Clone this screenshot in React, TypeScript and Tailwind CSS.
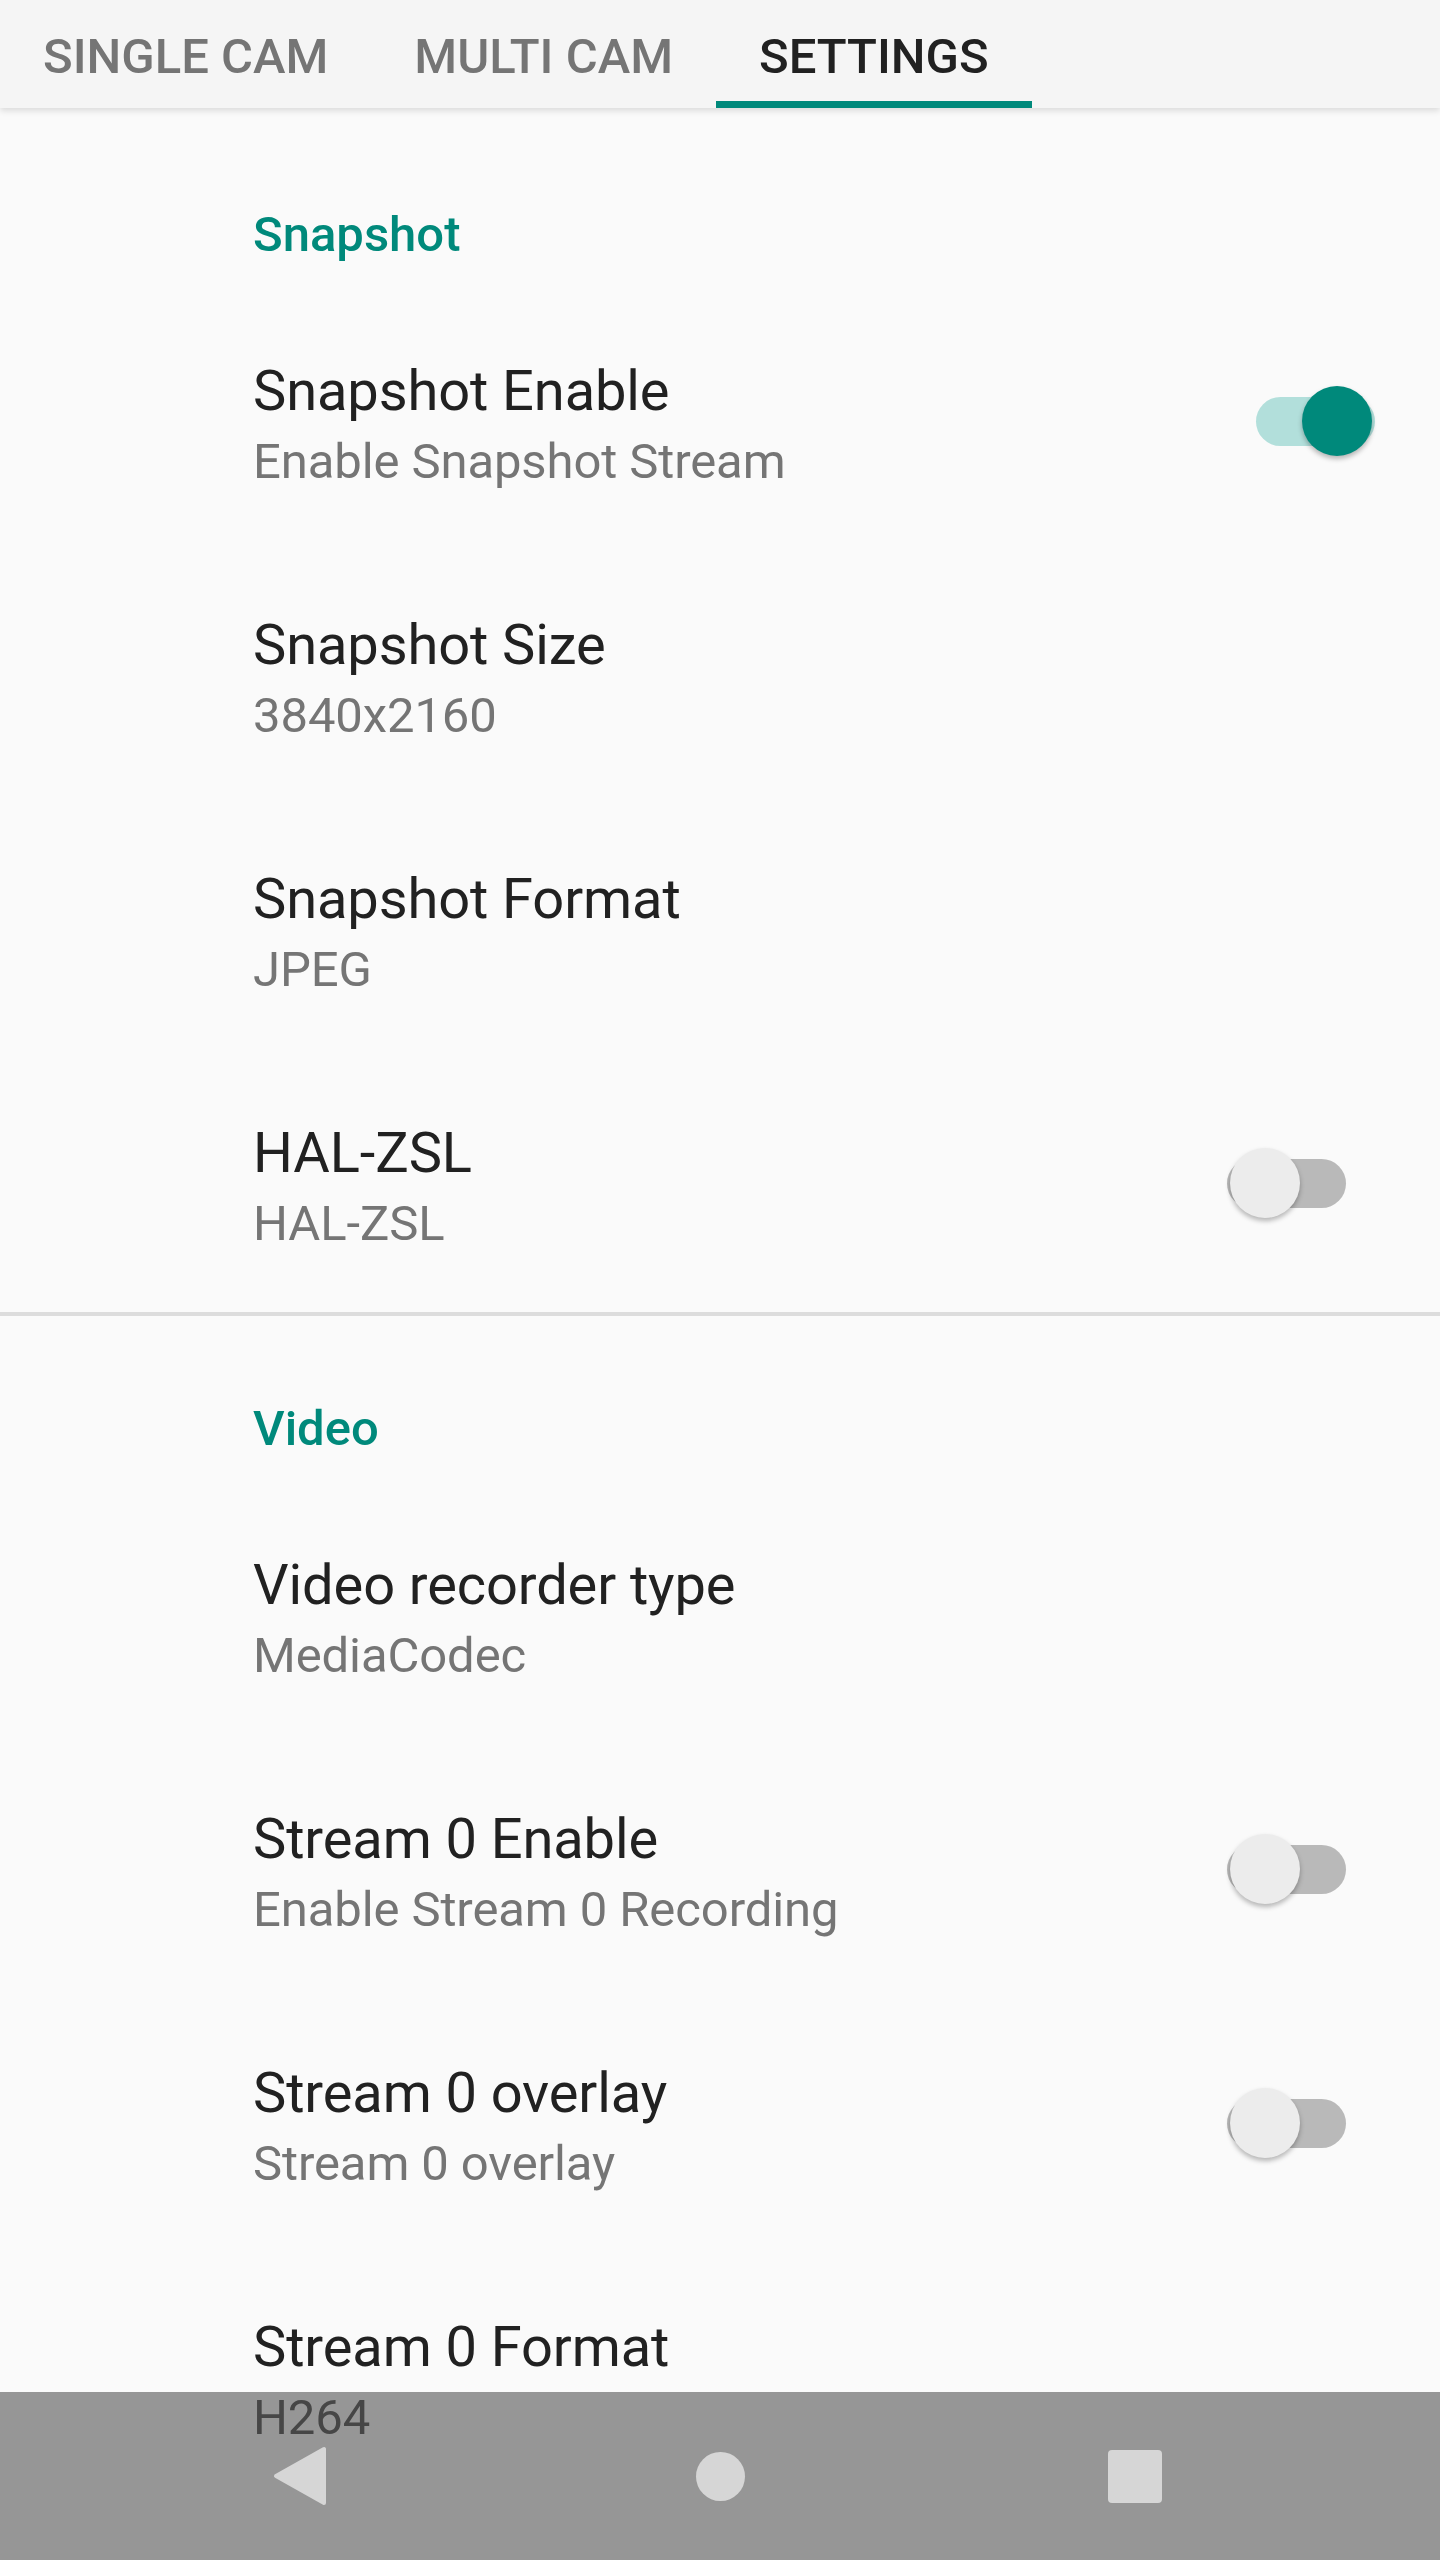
import React, { useState } from 'react';

type Pref = {
  title: string;
  summary: string;
  toggle?: boolean;
  on?: boolean;
  wide?: boolean;
};

const snapshotPrefs: Pref[] = [
  { title: 'Snapshot Enable', summary: 'Enable Snapshot Stream', toggle: true, on: true, wide: true },
  { title: 'Snapshot Size', summary: '3840x2160' },
  { title: 'Snapshot Format', summary: 'JPEG' },
  { title: 'HAL-ZSL', summary: 'HAL-ZSL', toggle: true, on: false },
];

const videoPrefs: Pref[] = [
  { title: 'Video recorder type', summary: 'MediaCodec' },
  { title: 'Stream 0 Enable', summary: 'Enable Stream 0 Recording', toggle: true, on: false },
  { title: 'Stream 0 overlay', summary: 'Stream 0 overlay', toggle: true, on: false },
  { title: 'Stream 0 Format', summary: 'H264' },
];

const Switch = ({ on, wide }: { on: boolean; wide?: boolean }) => (
  <div className={`relative -mt-[4px] h-[72px] w-[119px] shrink-0 ${wide ? 'mr-[65px]' : 'mr-[94px]'}`}>
    <div className={`absolute left-0 right-0 top-[12px] h-[49px] rounded-full ${on ? 'bg-[#b2dfdb]' : 'bg-[#b9b9b9]'}`} />
    <div
      className={`absolute top-[1px] h-[70px] w-[70px] rounded-full shadow-[0_3px_5px_rgba(0,0,0,0.28)] ${
        on ? 'right-[3px] bg-[#00897b]' : 'left-[3px] bg-[#ececec]'
      }`}
    />
  </div>
);

const Row = ({ p }: { p: Pref }) => (
  <div className="flex h-[254px] items-center">
    <div className="flex-1 pl-[253px] pt-[2px] tracking-[-0.1px]">
      <div className="text-[56px] leading-[66px] text-[#212121]">{p.title}</div>
      <div className="mt-[9px] text-[49px] leading-[58px] text-[#757575]">{p.summary}</div>
    </div>
    {p.toggle && <Switch on={!!p.on} wide={p.wide} />}
  </div>
);

const Header = ({ label, first }: { label: string; first?: boolean }) => (
  <div className={`pl-[253px] pb-[32px] ${first ? 'pt-[98px]' : 'pt-[84px]'}`}>
    <div className="text-[49px] font-medium leading-[58px] text-[#00897b]">{label}</div>
  </div>
);

export default function App() {
  const [tab] = useState(2);
  const tabs = ['SINGLE CAM', 'MULTI CAM', 'SETTINGS'];

  return (
    <div
      className="relative h-[2560px] w-[1440px] overflow-hidden bg-[#fafafa]"
      style={{ fontFamily: 'Roboto, "Noto Sans", sans-serif' }}
    >
      {/* tabs */}
      <div className="relative z-10 flex h-[108px] bg-[#f5f5f5] shadow-[0_3px_6px_rgba(0,0,0,0.12)]">
        {tabs.map((t, i) => (
          <div key={t} className="relative flex h-full items-center px-[43px] pt-[5px]">
            <span className={`text-[49px] font-medium ${i === tab ? 'text-[#212121]' : 'text-[#757575]'}`}>{t}</span>
            {i === tab && <div className="absolute bottom-0 left-0 right-0 h-[7px] bg-[#00897b]" />}
          </div>
        ))}
      </div>

      <Header label="Snapshot" first />
      {snapshotPrefs.map((p) => (
        <Row key={p.title} p={p} />
      ))}

      <div className="h-[4px] bg-[#dcdcdc]" />

      <Header label="Video" />
      {videoPrefs.map((p) => (
        <Row key={p.title} p={p} />
      ))}

      {/* nav bar */}
      <div className="absolute bottom-0 left-0 right-0 flex h-[168px] items-center justify-center bg-black/40">
        <div className="flex w-[420px] justify-center">
          <svg width="56" height="60" viewBox="0 0 56 60">
            <polygon
              points="52,3 52,57 4,30"
              fill="#d6d6d6"
              stroke="#d6d6d6"
              strokeWidth="4"
              strokeLinejoin="round"
            />
          </svg>
        </div>
        <div className="flex w-[420px] justify-center">
          <div className="h-[49px] w-[49px] rounded-full bg-[#d6d6d6]" />
        </div>
        <div className="flex w-[420px] justify-center pr-[10px]">
          <div className="h-[53px] w-[54px] rounded-[4px] bg-[#d6d6d6]" />
        </div>
      </div>
    </div>
  );
}
